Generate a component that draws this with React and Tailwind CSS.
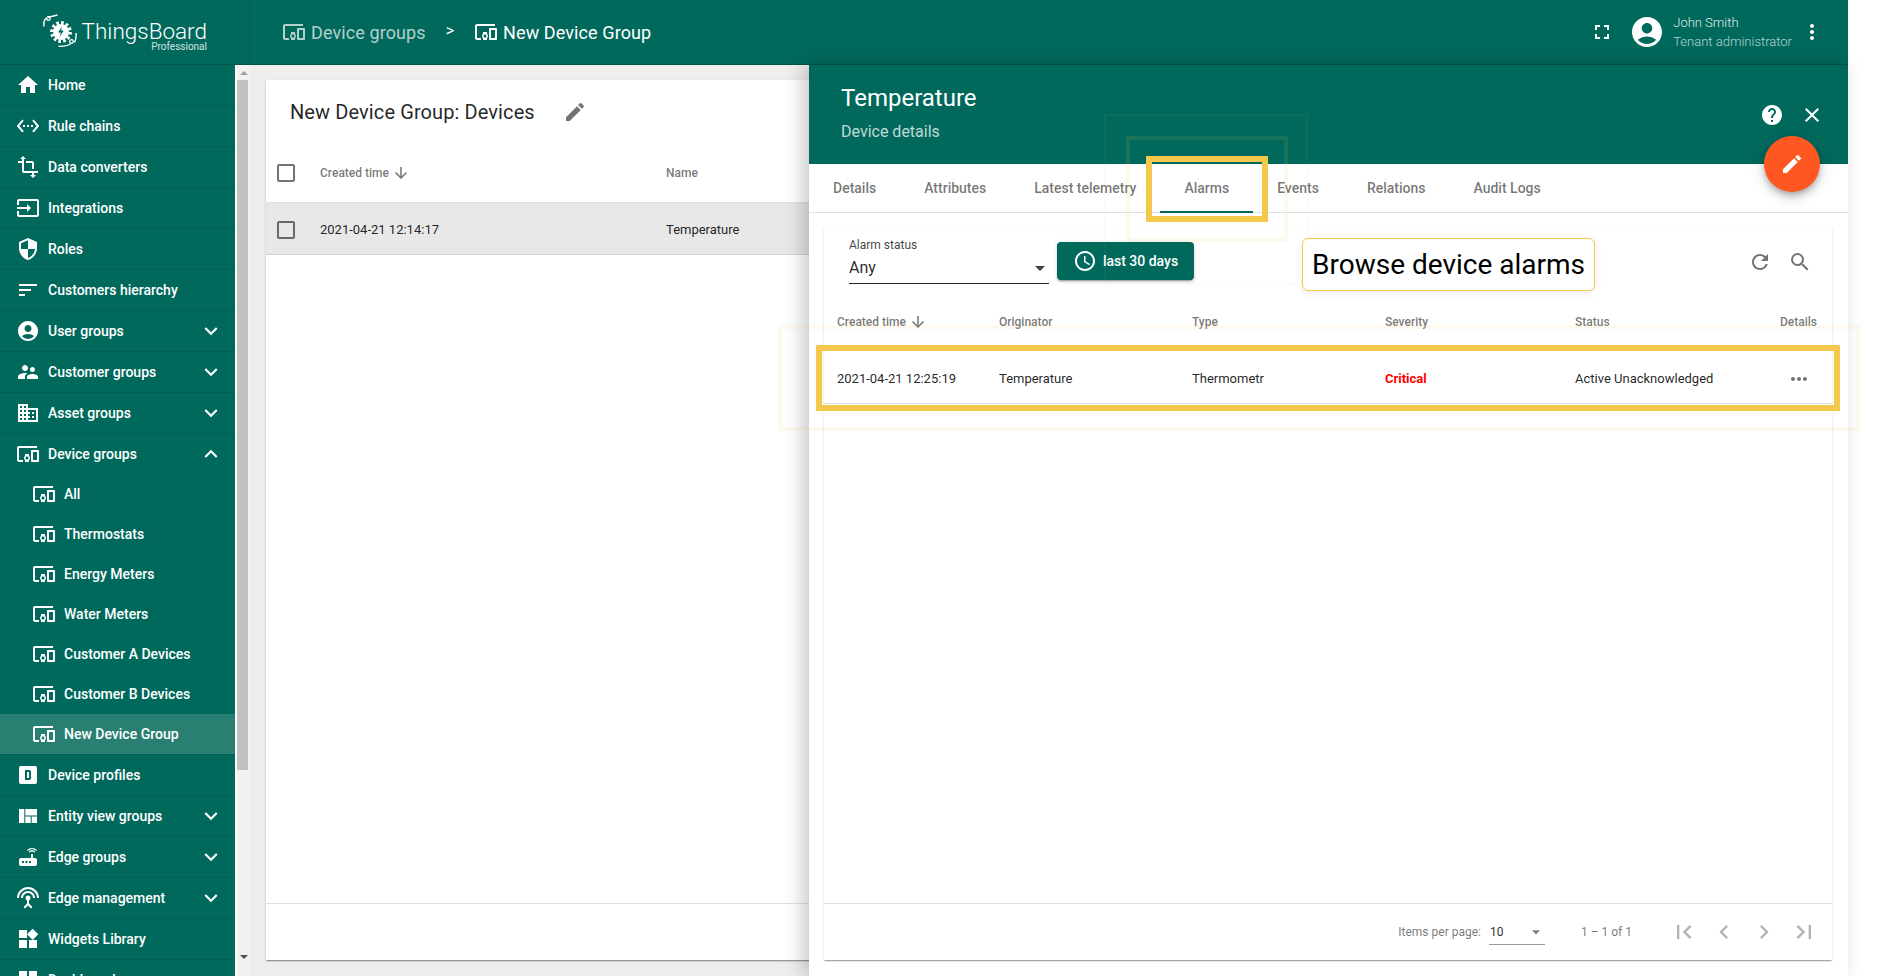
import {
  MdAccessTime,
  MdAccountCircle,
  MdArrowDownward,
  MdArrowDropDown,
  MdCheckBoxOutlineBlank,
  MdChevronLeft,
  MdChevronRight,
  MdClose,
  MdDashboard,
  MdDevicesOther,
  MdDomain,
  MdEdit,
  MdFirstPage,
  MdFullscreen,
  MdHelp,
  MdHome,
  MdInput,
  MdKeyboardArrowDown,
  MdKeyboardArrowUp,
  MdLastPage,
  MdMoreHoriz,
  MdMoreVert,
  MdRefresh,
  MdRouter,
  MdSearch,
  MdSecurity,
  MdSettingsEthernet,
  MdSettingsInputAntenna,
  MdSort,
  MdSupervisorAccount,
  MdTransform,
  MdViewQuilt,
  MdWidgets
} from "react-icons/md";

const DeviceProfileIcon = ({ className }) => (
  <svg viewBox="0 0 24 24" className={className} fill="currentColor">
    <path
      fillRule="evenodd"
      d="M9,7V17H13A2,2 0 0,0 15,15V9A2,2 0 0,0 13,7H9M11,9H13V15H11V9M5,3H19A2,2 0 0,1 21,5V19A2,2 0 0,1 19,21H5A2,2 0 0,1 3,19V5A2,2 0 0,1 5,3Z"
    />
  </svg>
);

const Logo = () => (
  <svg viewBox="0 0 34 34" className="h-[34px] w-[34px] shrink-0" fill="none" stroke="white">
    <circle cx="18" cy="18" r="8" fill="white" stroke="none" />
    <circle cx="18" cy="18" r="9.200" strokeWidth="3.400" strokeDasharray="2.600 2.200" />
    <path d="M19 12.500l-4 6h2.800l-1.300 4.500 4.300-6.500h-2.800z" fill="#00695c" stroke="none" />
    <path d="M1 12.500c-.6-4 .5-7 2.500-8.500" strokeWidth="1.400" />
    <path d="M5 3.500c3-.8 5.500-1.800 9.500-2.500" strokeWidth="1.400" />
    <circle cx="5.500" cy="4.500" r="1.800" strokeWidth="1.300" />
    <path d="M33 19c.5 4-.2 7-1.500 9.500" strokeWidth="1.400" />
    <path d="M28 29.500c-3.500 2.500-7 3-12.500 2.800" strokeWidth="1.400" />
    <circle cx="28.500" cy="27.500" r="1.800" strokeWidth="1.300" />
  </svg>
);

const navTop = [
  { icon: MdHome, label: "Home" },
  { icon: MdSettingsEthernet, label: "Rule chains" },
  { icon: MdTransform, label: "Data converters" },
  { icon: MdInput, label: "Integrations" },
  { icon: MdSecurity, label: "Roles" },
  { icon: MdSort, label: "Customers hierarchy" },
  { icon: MdAccountCircle, label: "User groups", arrow: true },
  { icon: MdSupervisorAccount, label: "Customer groups", arrow: true },
  { icon: MdDomain, label: "Asset groups", arrow: true }
];

const navSub = ["All", "Thermostats", "Energy Meters", "Water Meters", "Customer A Devices", "Customer B Devices", "New Device Group"];

const navBottom = [
  { icon: DeviceProfileIcon, label: "Device profiles" },
  { icon: MdViewQuilt, label: "Entity view groups", arrow: true },
  { icon: MdRouter, label: "Edge groups", arrow: true },
  { icon: MdSettingsInputAntenna, label: "Edge management", arrow: true },
  { icon: MdWidgets, label: "Widgets Library" },
  { icon: MdDashboard, label: "Dashboards" }
];

const tabs = ["Details", "Attributes", "Latest telemetry", "Alarms", "Events", "Relations", "Audit Logs"];

const NavRow = ({ item }) => (
  <div className="flex h-[41px] shrink-0 items-center border-b border-[#005f53] pl-4 pr-[11px]">
    <item.icon className="h-6 w-6 shrink-0 text-white" />
    <span className="ml-2 flex-1 text-[14px] font-medium text-white">{item.label}</span>
    {item.arrow ? <MdKeyboardArrowDown className="h-[26px] w-[26px] text-white" /> : null}
  </div>
);

const Sidebar = () => (
  <div className="flex h-full w-[250px] shrink-0">
    <nav className="flex w-[235px] flex-col overflow-hidden bg-[#00695c]">
      {navTop.map((item) => (
        <NavRow key={item.label} item={item} />
      ))}
      <div className="flex h-[40px] shrink-0 items-center pl-4 pr-[11px]">
        <MdDevicesOther className="h-6 w-6 shrink-0 text-white" />
        <span className="ml-2 flex-1 text-[14px] font-medium text-white">Device groups</span>
        <MdKeyboardArrowUp className="h-[26px] w-[26px] text-white" />
      </div>
      {navSub.map((label) => (
        <div
          key={label}
          className={`flex h-[40px] shrink-0 items-center pl-8 ${label === "New Device Group" ? "bg-[#2a7f73]" : ""}`}
        >
          <MdDevicesOther className="h-6 w-6 shrink-0 text-white" />
          <span className="ml-2 text-[14px] font-medium text-white">{label}</span>
        </div>
      ))}
      <div className="h-px shrink-0 bg-[#005f53]" />
      {navBottom.map((item) => (
        <NavRow key={item.label} item={item} />
      ))}
    </nav>
    <div className="flex w-[15px] flex-col border-l-2 border-white bg-[#f1f1f1]">
      <div className="flex h-[15px] items-center justify-center">
        <div className="h-0 w-0 border-x-[4px] border-b-[4px] border-x-transparent border-b-[#a3a3a3]" />
      </div>
      <div className="mr-[2px] h-[690px] bg-[#c1c1c1]" />
      <div className="mt-auto flex h-[22px] items-start justify-center pt-[1px]">
        <div className="h-0 w-0 border-x-[4px] border-t-[4px] border-x-transparent border-t-[#505050]" />
      </div>
    </div>
  </div>
);

const Footer = () => (
  <div className="mt-auto flex h-[57px] shrink-0 items-center border-t border-[#e0e0e0] pr-2">
    <div className="ml-auto flex items-center">
      <span className="text-[12px] text-black/55">Items per page:</span>
      <div className="ml-2 flex h-[26px] w-[56px] items-center justify-between border-b border-black/40 pl-[1px]">
        <span className="text-[12px] text-black/85">10</span>
        <MdArrowDropDown className="mr-[-1px] h-5 w-5 text-black/50" />
      </div>
      <span className="ml-9 mr-[32px] text-[12px] text-black/55">1 – 1 of 1</span>
      {[MdFirstPage, MdChevronLeft, MdChevronRight, MdLastPage].map((Icon, index) => (
        <div key={index} className="flex h-10 w-10 items-center justify-center">
          <Icon className="h-7 w-7 text-black/30" />
        </div>
      ))}
    </div>
  </div>
);

const DevicesCard = () => (
  <div className="flex h-full w-[600px] flex-col bg-white shadow-[0_2px_1px_-1px_rgba(0,0,0,.2),0_1px_1px_0_rgba(0,0,0,.14),0_1px_3px_0_rgba(0,0,0,.12)]">
    <div className="flex h-[64px] shrink-0 items-center pl-6">
      <span className="text-[20px] tracking-[.1px] text-black/87">New Device Group: Devices</span>
      <MdEdit className="ml-[28px] h-6 w-6 text-black/55" />
    </div>
    <div className="flex h-[59px] shrink-0 items-center border-b border-[#e0e0e0] pl-2">
      <MdCheckBoxOutlineBlank className="h-[24px] w-[24px] text-black/55" />
      <div className="ml-[22px] flex w-[346px] items-center text-[12px] font-medium text-black/55">
        Created time
        <MdArrowDownward className="ml-[3px] h-[18px] w-[18px] text-black/55" />
      </div>
      <span className="text-[12px] font-medium text-black/55">Name</span>
    </div>
    <div className="flex h-[52px] shrink-0 items-center border-b border-[#d4d4d4] bg-[#e8e8e8] pl-2 pt-[2px]">
      <MdCheckBoxOutlineBlank className="h-[24px] w-[24px] text-black/55" />
      <span className="ml-[22px] w-[346px] text-[13px] text-black/87">2021-04-21 12:14:17</span>
      <span className="text-[13px] text-black/87">Temperature</span>
    </div>
    <div className="mt-auto h-[57px] shrink-0 border-t border-[#e0e0e0]" />
  </div>
);

const AlarmsCard = () => (
  <div className="mb-4 ml-[15px] mr-4 mt-[15px] flex flex-1 flex-col bg-white shadow-[0_2px_1px_-1px_rgba(0,0,0,.2),0_1px_1px_0_rgba(0,0,0,.14),0_1px_3px_0_rgba(0,0,0,.08)]">
    <div className="flex h-[68px] shrink-0 pl-[25px] pr-5">
      <div className="mt-[10px] flex h-[46px] w-[200px] flex-col border-b border-black/85">
        <span className="text-[12px] leading-[14px] text-black/75">Alarm status</span>
        <div className="mt-[4px] flex items-center justify-between">
          <span className="text-[16px] leading-[20px] text-black/85">Any</span>
          <MdArrowDropDown className="ml-auto mr-[-3px] h-6 w-6 text-black/75" />
        </div>
      </div>
      <div className="ml-2 mt-[14px] flex h-[38px] w-[137px] items-center justify-center rounded-[4px] bg-[#00695c] text-[14px] font-medium text-white shadow-[0_3px_1px_-2px_rgba(0,0,0,.2),0_2px_2px_0_rgba(0,0,0,.14),0_1px_5px_0_rgba(0,0,0,.12)]">
        <MdAccessTime className="mr-[6px] h-6 w-6" />
        last 30 days
      </div>
      <div className="ml-auto mt-[22px] flex h-6 items-center gap-4 text-black/55">
        <MdRefresh className="h-6 w-6" />
        <MdSearch className="h-6 w-6" />
      </div>
    </div>
    <div className="grid h-[56px] shrink-0 grid-cols-[162px_193px_193px_190px_1fr_36px] items-center pb-[5px] pl-[13px] pr-4 text-[12px] font-medium text-black/55">
      <div className="flex items-center">
        Created time
        <MdArrowDownward className="ml-[3px] h-[18px] w-[18px]" />
      </div>
      <span>Originator</span>
      <span>Type</span>
      <span>Severity</span>
      <span>Status</span>
      <span className="pr-[1px] text-right">Details</span>
    </div>
    <div className="grid h-[52px] shrink-0 grid-cols-[162px_193px_193px_190px_1fr_36px] items-center border-b border-[#dcdcdc] pl-[13px] pr-4 pt-[2px] text-[13px] text-black/87">
      <span>2021-04-21 12:25:19</span>
      <span>Temperature</span>
      <span>Thermometr</span>
      <span className="font-bold text-[#ff0000]">Critical</span>
      <span>Active Unacknowledged</span>
      <div className="flex justify-center pl-[2px]">
        <MdMoreHoriz className="h-6 w-6 text-black/55" />
      </div>
    </div>
    <Footer />
  </div>
);

const DetailsPanel = () => (
  <div className="relative z-10 flex h-full flex-1 flex-col bg-white shadow-[-6px_0_18px_rgba(0,0,0,.22)]">
    <div className="flex h-[99px] shrink-0 items-start bg-[#00695c] pl-[32px] pr-6">
      <div className="flex flex-col">
        <span className="mt-[18px] text-[24px] leading-[30px] text-white">Temperature</span>
        <span className="mt-[9px] text-[16px] leading-[20px] text-white/75">Device details</span>
      </div>
      <div className="ml-auto mt-[38px] flex items-center gap-[16px] text-white">
        <MdHelp className="h-6 w-6" />
        <MdClose className="h-6 w-6" />
      </div>
    </div>
    <div className="flex h-[49px] shrink-0 border-b border-[#e0e0e0]">
      {tabs.map((tab) => (
        <div
          key={tab}
          className={`flex h-[49px] items-center px-6 text-[14px] font-medium text-black/55 ${tab === "Alarms" ? "border-b-2 border-[#00695c] pt-[2px]" : ""}`}
        >
          {tab}
        </div>
      ))}
    </div>
    <AlarmsCard />
  </div>
);

const App = () => (
  <div className="relative h-[976px] w-[1882px] overflow-hidden bg-white [font-family:Roboto,sans-serif]">
    <div className="flex h-full w-[1848px] flex-col">
      <header className="flex h-[65px] shrink-0 border-b border-[#00544a] bg-[#00695c]">
        <div className="flex w-[250px] shrink-0 border-r border-[#006156] pl-[43px] pt-[14px]">
          <Logo />
          <div className="ml-[4px] flex w-[126px] flex-col items-end pt-[3px]">
            <span className="text-[22.5px] font-light leading-[28px] text-white">ThingsBoard</span>
            <span className="mt-[-4px] text-[10px] leading-[12px] text-white/80">Professional</span>
          </div>
        </div>
        <div className="flex flex-1 items-center pl-[32px] pr-6">
          <MdDevicesOther className="h-[24px] w-[24px] text-white/70" />
          <span className="ml-[5px] text-[18px] tracking-[.1px] text-white/70">Device groups</span>
          <span className="mb-[2px] ml-[20px] text-[16px] text-white">&gt;</span>
          <MdDevicesOther className="ml-[20px] h-[24px] w-[24px] text-white" />
          <span className="ml-[5px] text-[18px] tracking-[.1px] text-white">New Device Group</span>
          <MdFullscreen className="ml-auto h-6 w-6 text-white" />
          <MdAccountCircle className="ml-[15px] h-[36px] w-[36px] text-white" />
          <div className="ml-[8px] flex flex-col text-[13px] font-light leading-[19px] text-white/85">
            <span>John Smith</span>
            <span className="text-white/70">Tenant administrator</span>
          </div>
          <MdMoreVert className="ml-[8px] h-6 w-6 text-white" />
        </div>
      </header>
      <div className="flex min-h-0 flex-1">
        <Sidebar />
        <main className="flex h-full flex-1">
          <div className="h-full w-[559px] shrink-0 overflow-hidden bg-[#eeeeee] pb-4 pl-4 pt-[15px]">
            <DevicesCard />
          </div>
          <DetailsPanel />
        </main>
      </div>
    </div>

    {/* highlight rings, these sit above the details panel */}
    <div className="pointer-events-none absolute left-[1104px] top-[114px] z-20 h-[171px] w-[204px] border-2 border-[#f4c84c]/5" />
    <div className="pointer-events-none absolute left-[1126px] top-[136px] z-20 h-[106px] w-[162px] border-4 border-[#f4c84c]/10" />
    <div className="pointer-events-none absolute left-[1146px] top-[156px] z-20 h-[66px] w-[122px] border-[6px] border-[#f4c84c]" />
    <div className="pointer-events-none absolute left-[778px] top-[325px] z-20 h-[106px] w-[1082px] border-4 border-[#f4c84c]/10" />
    <div className="pointer-events-none absolute left-[816px] top-[345px] z-20 h-[66px] w-[1024px] border-[6px] border-[#f4c84c]" />

    <div className="absolute left-[1302px] top-[238px] z-20 flex h-[53px] w-[293px] items-center justify-center rounded-[6px] border border-[#f4c84c] bg-white text-[28px] text-black shadow-[0_2px_8px_rgba(0,0,0,.08)]">
      Browse device alarms
    </div>

    <div className="absolute left-[1764px] top-[136px] z-30 flex h-[56px] w-[56px] items-center justify-center rounded-full bg-[#ff5722] text-white shadow-[0_3px_5px_-1px_rgba(0,0,0,.2),0_6px_10px_0_rgba(0,0,0,.14),0_1px_18px_0_rgba(0,0,0,.12)]">
      <MdEdit className="h-6 w-6" />
    </div>
  </div>
);

export default App;
